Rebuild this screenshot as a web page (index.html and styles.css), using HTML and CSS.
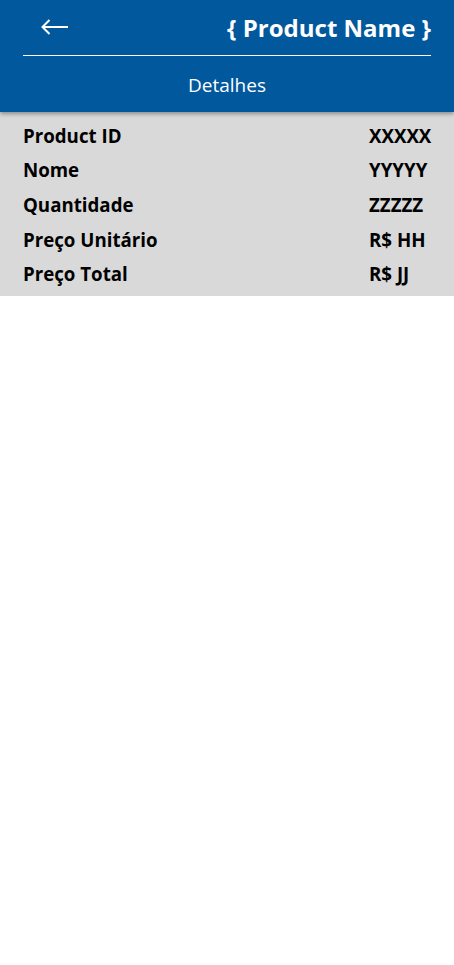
FILE: index.html
```html
<!DOCTYPE html>
<html>
<head>
<meta charset="utf-8">
<link rel="stylesheet" href="styles.css">
</head>
<body>
<header class="header">
  <div class="topbar">
    <svg class="back" width="28" height="18" viewBox="0 0 28 18">
      <path d="M27 9H2M8.5 2L1.5 9L8.5 16" fill="none" stroke="#fff" stroke-width="2"/>
    </svg>
    <h1 class="title">{ Product Name }</h1>
  </div>
  <div class="divider"></div>
  <div class="subtitle">Detalhes</div>
</header>
<section class="details">
  <div class="row"><span class="label">Product ID</span><span class="value">XXXXX</span></div>
  <div class="row"><span class="label">Nome</span><span class="value">YYYYY</span></div>
  <div class="row"><span class="label">Quantidade</span><span class="value">ZZZZZ</span></div>
  <div class="row"><span class="label">Preço Unitário</span><span class="value">R$ HH</span></div>
  <div class="row"><span class="label">Preço Total</span><span class="value">R$ JJ</span></div>
</section>
</body>
</html>
```
FILE: styles.css
```css
* { box-sizing: border-box; }
html, body { margin: 0; padding: 0; background: #fff; }
body { font-family: "Open Sans", "Noto Sans", sans-serif; width: 454px; }
.header {
  background: #02589c;
  height: 112px;
  padding: 0 23px;
  color: #fff;
  position: relative;
  z-index: 1;
  box-shadow: 0 2px 4px rgba(0,0,0,0.35);
}
.topbar {
  height: 55px;
  display: flex;
  align-items: center;
  justify-content: space-between;
  padding-bottom: 1px;
}
.back { margin-left: 18px; margin-top: -1px; display: block; }
.title {
  margin: 0;
  font-size: 24px;
  font-weight: 700;
  line-height: 32px;
  margin-top: 1px;
}
.divider { height: 1px; background: #fff; }
.subtitle {
  text-align: center;
  font-size: 19px;
  line-height: 26px;
  padding-top: 16px;
}
.details {
  background: #d9d9d9;
  padding: 6px 23px 5px;
  height: 184px;
}
.row {
  display: flex;
  height: 34.6px;
  align-items: center;
  font-size: 18.7px;
  font-weight: 700;
  color: #000;
}
.label { flex: 1; }
.value { width: 62px; }
```
